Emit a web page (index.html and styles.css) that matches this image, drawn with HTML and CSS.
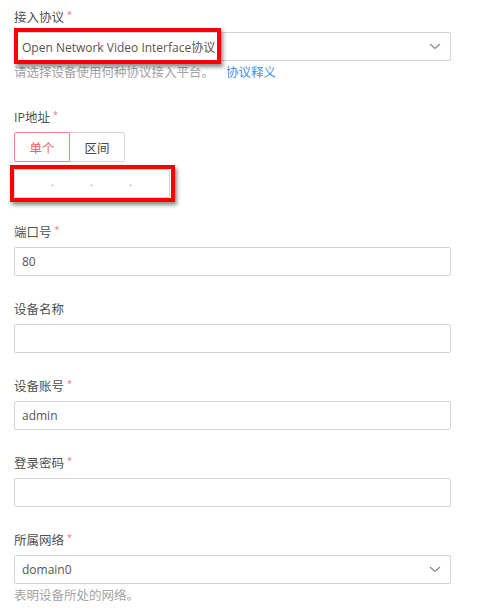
FILE: index.html
```html
<!DOCTYPE html>
<html lang="zh-CN">
<head>
<meta charset="utf-8">
<title>添加设备</title>
<link rel="stylesheet" href="styles.css">
</head>
<body>
<form class="form">
  <div class="field">
    <div class="label">接入协议<span class="req">*</span></div>
    <div class="control select">
      <span class="value">Open Network Video Interface协议</span>
      <svg class="chev" width="12" height="7" viewBox="0 0 12 7"><path d="M1 1l5 4.5L11 1" fill="none" stroke="#8a8a8a" stroke-width="1.3"/></svg>
    </div>
    <div class="help">请选择设备使用何种协议接入平台。<a class="link">协议释义</a></div>
    <div class="mark mark-protocol"></div>
  </div>

  <div class="field field-ip">
    <div class="label">IP地址<span class="req">*</span></div>
    <div class="seg">
      <span class="seg-btn active">单个</span>
      <span class="seg-btn">区间</span>
    </div>
    <div class="control ip">
      <span class="dot">.</span><span class="dot">.</span><span class="dot">.</span>
    </div>
    <div class="mark mark-ip"></div>
  </div>

  <div class="field">
    <div class="label">端口号<span class="req">*</span></div>
    <div class="control"><span class="value">80</span></div>
  </div>

  <div class="field">
    <div class="label">设备名称</div>
    <div class="control"></div>
  </div>

  <div class="field">
    <div class="label">设备账号<span class="req">*</span></div>
    <div class="control"><span class="value">admin</span></div>
  </div>

  <div class="field">
    <div class="label">登录密码<span class="req">*</span></div>
    <div class="control"></div>
  </div>

  <div class="field">
    <div class="label">所属网络<span class="req">*</span></div>
    <div class="control select">
      <span class="value">domain0</span>
      <svg class="chev" width="12" height="7" viewBox="0 0 12 7"><path d="M1 1l5 4.5L11 1" fill="none" stroke="#8a8a8a" stroke-width="1.3"/></svg>
    </div>
    <div class="help">表明设备所处的网络。</div>
  </div>
</form>
</body>
</html>
```

FILE: styles.css
```css
html, body {
  margin: 0;
  padding: 0;
  background: #ffffff;
}

body {
  font-family: "Open Sans", "Noto Sans CJK SC", sans-serif;
  color: #555555;
}

.form {
  width: 437px;
  padding: 8px 0 0 14px;
  display: flex;
  flex-direction: column;
}

.field {
  position: relative;
  display: flex;
  flex-direction: column;
  margin-bottom: 24px;
}

.field-ip {
  margin-bottom: 25px;
}

.label {
  font-size: 12.5px;
  line-height: 20px;
  height: 20px;
  margin-bottom: 4px;
  color: #505050;
  display: flex;
  align-items: flex-start;
}

.req {
  color: #f46c6c;
  font-size: 9px;
  line-height: 12px;
  margin-left: 3px;
  margin-top: 1px;
}

.control {
  box-sizing: border-box;
  height: 29px;
  border: 1px solid #d4d4d4;
  border-radius: 2px;
  background: #ffffff;
  display: flex;
  align-items: center;
  padding: 0 7px;
  font-size: 12px;
  color: #555555;
}

.select {
  justify-content: space-between;
}

.value {
  white-space: nowrap;
}

.chev {
  margin-right: 2px;
}

.help {
  font-size: 12.5px;
  line-height: 18px;
  margin-top: 3px;
  margin-bottom: 2px;
  color: #a3a3a3;
  display: flex;
  gap: 12px;
}

.link {
  color: #3f8fe8;
  cursor: pointer;
}

.seg {
  display: flex;
  height: 30px;
}

.seg-btn {
  box-sizing: border-box;
  width: 56px;
  height: 30px;
  border: 1px solid #d4d4d4;
  display: flex;
  align-items: center;
  justify-content: center;
  font-size: 12.5px;
  color: #444444;
}

.seg-btn:first-child {
  border-radius: 2px 0 0 2px;
}

.seg-btn:last-child {
  border-left: none;
  width: 55px;
  border-radius: 0 2px 2px 0;
}

.seg-btn.active {
  color: #f45c5c;
  border-color: #f08585;
}

.ip {
  margin-top: 7px;
  width: 156px;
  padding: 0 0 0 36px;
}

.dot {
  width: 39px;
  font-size: 11px;
  color: #888888;
  line-height: 1;
  padding-bottom: 4px;
}

.mark {
  position: absolute;
  box-sizing: border-box;
  border: 4px solid #ff0000;
  box-shadow: 2px 3px 4px rgba(0, 0, 0, 0.45);
  pointer-events: none;
}

.mark-protocol {
  top: 20px;
  left: 0;
  width: 207px;
  height: 36px;
}

.mark-ip {
  top: 57px;
  left: -4px;
  width: 165px;
  height: 37px;
}
```
